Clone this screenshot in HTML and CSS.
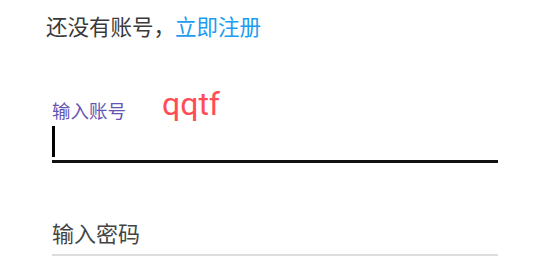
FILE: index.html
```html
<!DOCTYPE html>
<html lang="zh-CN">
<head>
<meta charset="utf-8">
<title>登录</title>
<link rel="stylesheet" href="styles.css">
</head>
<body>
<div class="page">
  <p class="register">还没有账号，<a class="register-link" href="#">立即注册</a></p>
  <div class="form">
    <div class="field field-account">
      <div class="label-row">
        <span class="label">输入账号</span>
        <span class="hint">qqtf</span>
      </div>
      <div class="input-area">
        <span class="cursor"></span>
      </div>
    </div>
    <div class="field field-password">
      <div class="placeholder">输入密码</div>
    </div>
  </div>
</div>
</body>
</html>
```

FILE: styles.css
```css
html, body {
  margin: 0;
  padding: 0;
  background: #ffffff;
}

body {
  font-family: "Noto Sans CJK SC", "Noto Sans", Roboto, sans-serif;
  width: 550px;
  height: 275px;
  overflow: hidden;
}

.page {
  display: flex;
  flex-direction: column;
}

.register {
  margin: 0;
  padding: 14px 0 0 46px;
  font-size: 21.5px;
  line-height: 24px;
  color: #3a3a3a;
}

.register-link {
  color: #1a9cf0;
  text-decoration: none;
}

.form {
  display: flex;
  flex-direction: column;
  margin-left: 52px;
  width: 446px;
}

.field-account {
  margin-top: 58px;
}

.label-row {
  display: flex;
  align-items: flex-end;
  height: 24px;
}

.label {
  font-size: 18.5px;
  line-height: 20px;
  color: #6654b4;
}

.hint {
  margin-left: 36px;
  font-family: Roboto, "Noto Sans", sans-serif;
  font-size: 32px;
  line-height: 30px;
  color: #ff4d55;
  position: relative;
  top: -1px;
}

.input-area {
  height: 40px;
  border-bottom: 3px solid #111111;
  display: flex;
  align-items: flex-end;
}

.cursor {
  display: block;
  width: 3px;
  height: 31px;
  margin-bottom: 3px;
  background: #000000;
}

.field-password {
  margin-top: 54px;
}

.placeholder {
  font-size: 22px;
  line-height: 30px;
  color: #444444;
  padding-bottom: 7px;
  border-bottom: 2px solid #dddddd;
}
```
